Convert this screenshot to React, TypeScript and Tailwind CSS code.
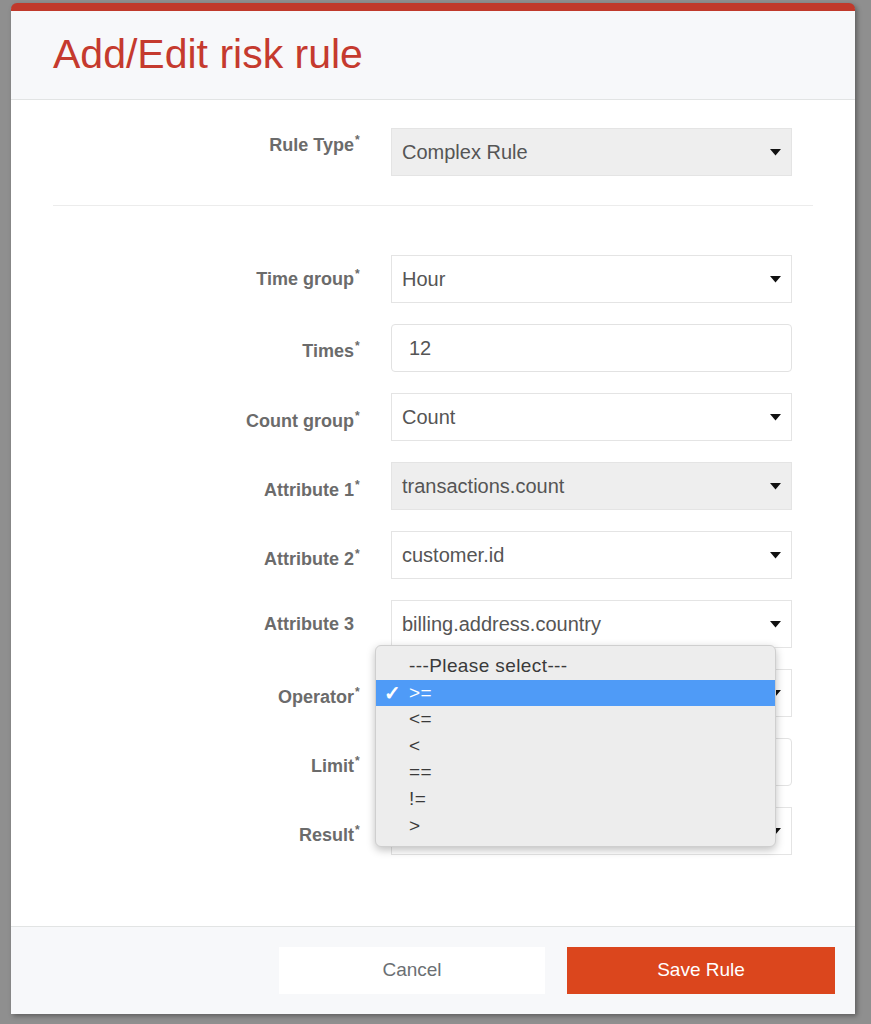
import React from "react";

type Field = {
  label: string;
  value: string;
  required?: boolean;
  kind?: "select" | "input";
  disabled?: boolean;
  labelClass?: string;
};

const fields: Field[] = [
  { label: "Time group", value: "Hour", required: true, labelClass: "mt-0" },
  { label: "Times", value: "12", required: true, kind: "input", labelClass: "mt-[6px]" },
  { label: "Count group", value: "Count", required: true },
  { label: "Attribute 1", value: "transactions.count", required: true, disabled: true },
  { label: "Attribute 2", value: "customer.id", required: true },
  { label: "Attribute 3", value: "billing.address.country", labelClass: "mt-0" },
  { label: "Operator", value: ">=", required: true },
  { label: "Limit", value: "", required: true, kind: "input" },
  { label: "Result", value: "", required: true },
];

const options = ["---Please select---", ">=", "<=", "<", "==", "!=", ">"];

function Caret() {
  return (
    <svg width="11" height="7" viewBox="0 0 11 7" className="shrink-0">
      <path d="M0 0 H11 L5.5 6.5 Z" fill="#111" />
    </svg>
  );
}

function Label({ text, required, className = "mt-[8px]" }: { text: string; required?: boolean; className?: string }) {
  return (
    <div className={`w-[338px] shrink-0 pr-[30px] text-right ${className}`}>
      <span className="text-[18px] font-bold leading-[24px] text-[#6b6b6b]">{text}</span>
      {required ? (
        <span className="relative -top-[7px] ml-[1px] inline-block w-[6px] text-left text-[12px] font-bold text-[#6b6b6b]">*</span>
      ) : (
        <span className="inline-block w-[7px]" />
      )}
    </div>
  );
}

function Control({ field }: { field: Field }) {
  if (field.kind === "input") {
    return (
      <div className="flex h-[48px] w-[401px] items-center rounded-[4px] border border-[#e2e2e2] bg-white px-[17px] text-[20px] text-[#555]">
        {field.value}
      </div>
    );
  }
  return (
    <div
      className={`flex h-[48px] w-[401px] items-center justify-between border border-[#e4e4e4] pl-[10px] pr-[10px] text-[20px] text-[#555] ${
        field.disabled ? "bg-[#eeeeee]" : "bg-white"
      }`}
    >
      <span>{field.value}</span>
      <Caret />
    </div>
  );
}

function Dropdown() {
  return (
    <div className="absolute -left-[16px] -top-[24px] z-10 w-[401px] rounded-[6px] border border-[#cfcfcf] bg-[#ededed] py-[7px] shadow-[0_3px_8px_rgba(0,0,0,0.25)]">
      {options.map((o, i) => {
        const active = i === 1;
        return (
          <div
            key={o}
            className={`relative flex h-[26.6px] items-center pl-[33px] text-[19px] tracking-[0.4px] ${
              active ? "bg-[#4f9bf7] text-white" : "text-[#3a3a3a]"
            }`}
          >
            {active && <span className="absolute left-[8px] text-[20px] font-bold">✓</span>}
            {o}
          </div>
        );
      })}
    </div>
  );
}

export default function App() {
  return (
    <div
      className="min-h-[1024px] bg-[#8f8f8f] pl-[11px] pt-[3px]"
      style={{ fontFamily: '"Liberation Sans", Arial, Helvetica, sans-serif' }}
    >
      <div className="w-[844px] rounded-t-[6px] border-t-[8px] border-[#c0392b] bg-white shadow-[2px_2px_5px_rgba(0,0,0,0.35)]">
        <div className="flex h-[89px] items-center border-b border-[#e2e4e4] bg-[#f7f8fa] pl-[42px]">
          <h1 className="pb-[2px] text-[41px] font-normal leading-none text-[#c53a2e]">Add/Edit risk rule</h1>
        </div>

        <div className="px-[42px] pb-[71px] pt-[28px]">
          <div className="flex items-center">
            <Label text="Rule Type" required className="mb-[14px]" />
            <Control field={{ label: "Rule Type", value: "Complex Rule", disabled: true }} />
          </div>

          <div className="mb-[49px] mt-[29px] h-px bg-[#ececec]" />

          <div className="flex flex-col gap-[21px]">
            {fields.map((f) => (
              <div key={f.label} className="flex items-center">
                <Label text={f.label} required={f.required} className={f.labelClass} />
                <div className="relative">
                  <Control field={f} />
                  {f.label === "Operator" && <Dropdown />}
                </div>
              </div>
            ))}
          </div>
        </div>

        <div className="flex justify-end gap-[22px] border-t border-[#e2e4e4] bg-[#f7f8fa] px-[20px] py-[20px]">
          <button className="h-[47px] w-[266px] bg-white text-[19px] text-[#6b6f73]">Cancel</button>
          <button className="h-[47px] w-[268px] bg-[#db461d] text-[19px] text-white">Save Rule</button>
        </div>
      </div>
    </div>
  );
}
